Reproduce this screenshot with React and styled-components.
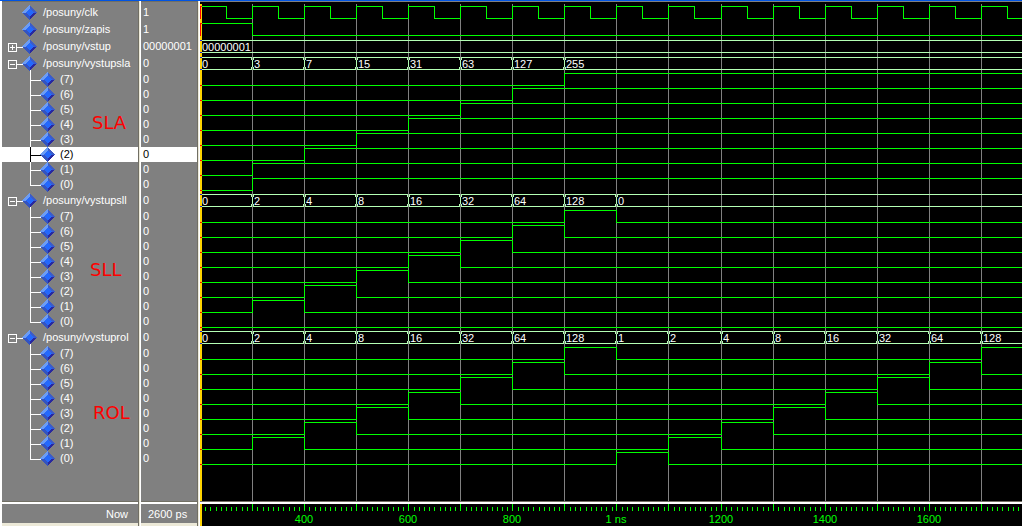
import React from 'react';
import styled, { createGlobalStyle } from 'styled-components';

const GlobalStyle = createGlobalStyle`
body{
margin:0;
background-color:#000;
}
`;

const Window = styled.main`
display:flex;
min-height:100vh;
box-sizing:border-box;
border-top:1px solid #0054e3;
background-color:#ece9d8;
font-family:"Liberation Sans", Arial, sans-serif;
font-size:11px;
line-height:15px;
color:#fff;
`;

const Pane = styled.section`
display:flex;
flex-direction:column;
box-sizing:border-box;
`;

const NamesPane = styled(Pane)`
position:relative;
width:138px;
flex:none;
border-left:2px solid #fff;
`;

const ValuesPane = styled(Pane)`
width:56px;
flex:none;
`;

const WavePane = styled(Pane)`
flex:1;
min-width:0;
overflow:hidden;
background-color:#000;
`;

const Divider = styled.div`
width:1px;
flex:none;
background-color:#716f64;
border-right:1px solid #ece9d8;
box-shadow:1px 0 #fff;
margin-right:1px;
`;

const Rows = styled.div`
flex:1;
padding-top:2px;
border-top:1px solid #716f64;
border-bottom:1px solid #716f64;
background-color:#808080;
`;

const Row = styled.div`
display:flex;
align-items:center;
box-sizing:border-box;
height:${p => p.$bit ? 15 : 17}px;
color:${p => p.$selected ? '#000' : '#fff'};
background-color:${p => p.$selected ? '#fff' : 'transparent'};
white-space:nowrap;
`;

const NameRow = styled(Row)`
padding-left:${p => p.$bit ? 28 : 6}px;
`;

const ValueRow = styled(Row)`
padding-left:2px;
`;

const Name = styled.span`
margin-left:${p => p.$bit ? 2 : 6}px;
`;

const Toggle = styled.button`
width:9px;
height:17px;
padding:0;
border:none;
background:none;
color:inherit;
visibility:${p => p.$empty ? 'hidden' : 'visible'};
`;

const Drawing = styled.svg`
display:block;
flex:none;
shape-rendering:crispEdges;
`;

const Footer = styled.div`
box-sizing:border-box;
height:24px;
padding:3px 10px 0 7px;
border-top:2px solid #fff;
border-bottom:3px solid #ece9d8;
background-color:#808080;
text-align:${p => p.$right ? 'right' : 'left'};
white-space:nowrap;
`;

const Traces = styled.div`
flex:1;
display:flex;
flex-direction:column;
padding-top:2px;
border-top:1px solid #808080;
border-bottom:1px solid #716f64;
`;

const Trace = styled(Drawing)`
width:100%;
height:${p => p.$height}px;
`;

const Filler = styled(Drawing)`
width:100%;
height:0;
flex:1 1 0;
`;

const Ruler = styled(Drawing)`
width:100%;
height:24px;
border-top:2px solid #fff;
box-sizing:border-box;
`;

const Note = styled.strong`
position:absolute;
left:${p => p.$left}px;
top:${p => p.$top}px;
font:18px/20px "DejaVu Sans", sans-serif;
color:#f00;
`;

const STEP = 52.1;
// 100 ps per step, from 200 ps to the end of the run
const STEPS = 24;
const xAt = step => Math.floor(step * STEP);

const bits = values => [7, 6, 5, 4, 3, 2, 1, 0].map(n => ({
    name: `(${n})`,
    bit: true,
    last: n === 0,
    value: '0',
    levels: values.map(v => (v >> n) & 1),
}));

const sla = [0, 3, 7, 15, 31, 63, 127, 255];
const sll = [0, 2, 4, 8, 16, 32, 64, 128, 0];
const rol = [0, 2, 4, 8, 16, 32, 64, 128, 1, 2, 4, 8, 16, 32, 64, 128];

const slaBits = bits(sla);
slaBits[5].selected = true;

const signals = [
    { name: '/posuny/clk', value: '1', clock: true },
    { name: '/posuny/zapis', value: '1', levels: [1, 0] },
    { name: '/posuny/vstup', value: '00000001', toggle: 'plus', bus: ['00000001'] },
    { name: '/posuny/vystupsla', value: '0', toggle: 'minus', bus: sla },
    ...slaBits,
    { name: '/posuny/vystupsll', value: '0', toggle: 'minus', bus: sll },
    ...bits(sll),
    { name: '/posuny/vystuprol', value: '0', toggle: 'minus', bus: rol },
    ...bits(rol),
];

const rulerLabels = [2, 4, 6, 8, 10, 12, 14];

function App(){
    return(
        <>
            <GlobalStyle />
            <Window>
                <NamesPane>
                    <Rows>
                        {signals.map((s, i) => <SignalName key={i} signal={s} />)}
                    </Rows>
                    <Footer $right>Now</Footer>
                    <Note $left={90} $top={112}>SLA</Note>
                    <Note $left={88} $top={259}>SLL</Note>
                    <Note $left={91} $top={402}>ROL</Note>
                </NamesPane>
                <Divider />
                <ValuesPane>
                    <Rows>
                        {signals.map((s, i) => (
                            <ValueRow key={i} $bit={s.bit} $selected={s.selected}>{s.value}</ValueRow>
                        ))}
                    </Rows>
                    <Footer>2600 ps</Footer>
                </ValuesPane>
                <Divider />
                <WavePane>
                    <Traces>
                        {signals.map((s, i) => <Wave key={i} signal={s} />)}
                        <Filler>
                            <Grid />
                            <Cursor />
                        </Filler>
                    </Traces>
                    <TimeRuler />
                </WavePane>
            </Window>
        </>
    )
}

export default App;

function SignalName({ signal }){
    const { name, bit, last, selected, toggle } = signal;
    if(bit){
        return(
            <NameRow $bit $selected={selected}>
                <Drawing width="28" height="15" overflow="visible">
                    <path d={`M0.5 0V${last ? 9 : 15}M0 8.5H11`} stroke="currentColor" fill="none" />
                    <Diamond x={10} y={0} />
                </Drawing>
                <Name $bit>{name}</Name>
            </NameRow>
        )
    }
    return(
        <NameRow>
            <Toggle type="button" $empty={!toggle} aria-label={`${toggle === 'plus' ? 'Expand' : 'Collapse'} ${name}`}>
                <Drawing width="9" height="17">
                    <path d={`M0.5 5.5H8.5V13.5H0.5ZM2 9.5H7${toggle === 'plus' ? 'M4.5 7V12' : ''}`} stroke="currentColor" fill="none" />
                </Drawing>
            </Toggle>
            <Drawing width="20" height="17">
                {toggle && <path d="M0 9.5H6" stroke="#fff" />}
                {toggle === 'minus' && <path d="M13.5 14V17" stroke="#fff" />}
                <Diamond x={5} y={1} />
            </Drawing>
            <Name>{name}</Name>
        </NameRow>
    )
}

function Diamond({ x, y }){
    return(
        <g transform={`translate(${x} ${y})`}>
            <path d="M7.5 0L0 7.5H7.5Z" fill="#6c9cf4" />
            <path d="M7.5 0L15 7.5H7.5Z" fill="#3c5cc8" />
            <path d="M0 7.5L7.5 15V7.5Z" fill="#3454c0" />
            <path d="M15 7.5L7.5 15V7.5Z" fill="#2828a0" />
            <path d="M7.5 3.5L11.5 7.5L7.5 11.5L3.5 7.5Z" fill="#2468fc" />
        </g>
    )
}

function Grid(){
    return Array.from({ length: STEPS }, (_, i) => (
        <rect key={i} x={xAt(i + 1)} y="0" width="1" height="100%" fill="#808080" />
    ));
}

function Cursor(){
    return <rect x="0" y="0" width="2" height="100%" fill="#ffd400" />;
}

function levelPath(levels, high, low){
    let d = `M0 ${levels[0] ? high : low}`;
    levels.forEach((level, i) => {
        if(i > 0 && level !== levels[i - 1]){
            d += `H${xAt(i) + 0.5}V${level ? high : low}`;
        }
    });
    return d + `H${xAt(STEPS)}`;
}

function clockPath(){
    let d = 'M0 2.5';
    for(let i = 0; i < STEPS; i++){
        d += `H${xAt(i + 0.5) + 0.5}V14.5H${xAt(i + 1) + 0.5}V2.5`;
    }
    return d;
}

function Wave({ signal }){
    const { bit, bus, clock, levels } = signal;
    const high = bit ? 1.5 : 2.5;
    return(
        <Trace $height={bit ? 15 : 17}>
            <Grid />
            {clock && <path d={clockPath()} stroke="#0f0" fill="none" />}
            {levels && <path d={levelPath(levels, high, high + 12)} stroke="#0f0" fill="none" />}
            {bus && <Bus values={bus} />}
            <Cursor />
            {bit && <path d="M0 13.5H2" stroke="#f00" />}
            {bus && <path d="M0 2.5H2M0 14.5H2" stroke="#22c" />}
            {!bit && !bus && <path d="M2 2.5H0.5V15" stroke="#f00" fill="none" />}
        </Trace>
    )
}

function Bus({ values }){
    const end = xAt(STEPS);
    return(
        <>
            <path d={`M0 2.5H${end}M0 14.5H${end}`} stroke="#b4ffb4" />
            {values.map((v, i) => {
                const x = xAt(i);
                return(
                    <React.Fragment key={i}>
                        {i > 0 && <path d={`M${x + 0.5} 2V15`} stroke="#808080" />}
                        {i > 0 && <path d={`M${x - 0.5} 2V5M${x + 1.5} 2V5M${x + 0.5} 5V12M${x - 0.5} 12V15M${x + 1.5} 12V15`} stroke="#b4ffb4" />}
                        <text x={x + 2} y="13" fill="#fff">{v}</text>
                    </React.Fragment>
                )
            })}
        </>
    )
}

function TimeRuler(){
    const ticks = Array.from({ length: STEPS * 10 }, (_, i) => i + 1);
    return(
        <Ruler>
            {ticks.map(n => n % 10 === 0
                ? <rect key={n} x={xAt(n / 10)} y="0" width="1" height="7" fill="#0f0" />
                : <rect key={n} x={Math.round(n * STEP / 10)} y="3" width="1" height="4" fill="#0f0" />
            )}
            {rulerLabels.map(n => {
                const ps = 200 + n * 100;
                return <text key={n} x={xAt(n)} y="19" textAnchor="middle" fill="#0f0">{ps === 1000 ? '1 ns' : ps}</text>
            })}
            <Cursor />
        </Ruler>
    )
}
